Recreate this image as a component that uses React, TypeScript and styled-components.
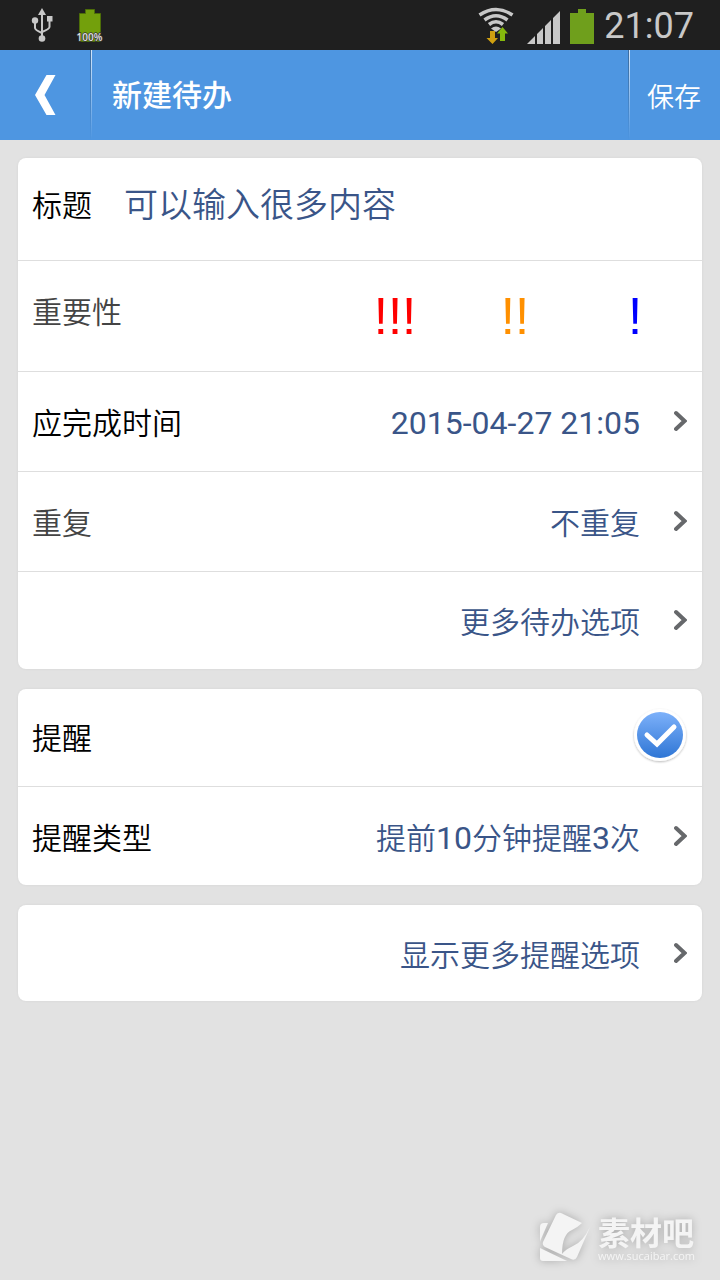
import React, { useState } from "react";
import styled, { createGlobalStyle } from "styled-components";

const GlobalStyle = createGlobalStyle`
  * { box-sizing: border-box; }
  body {
    margin: 0;
    background: #e2e2e2;
    font-family: Roboto, "Noto Sans CJK SC DemiLight", "Noto Sans CJK SC", sans-serif;
    font-size: 30px;
    font-weight: 350;
    line-height: 40px;
    color: #000;
  }
  button, input { font: inherit; color: inherit; }
`;

const Screen = styled.div`
  position: relative;
  min-height: 100vh;
  display: flex;
  flex-direction: column;
`;

const StatusBar = styled.div`
  height: 50px;
  padding: 2px 26px 0 28px;
  display: flex;
  align-items: center;
  justify-content: space-between;
  background: #1f1f1f;
  color: #c8c8c8;
`;

const StatusGroup = styled.div<{ $gap: number }>`
  display: flex;
  align-items: center;
  gap: ${(p) => p.$gap}px;
`;

const Clock = styled.time`
  font-size: 36px;
  font-weight: 400;
`;

const TitleBar = styled.header`
  height: 90px;
  display: flex;
  background: #4e96e1;
  color: #fff;
`;

const Separator = styled.span`
  width: 2px;
  background: linear-gradient(90deg, #3c6c9e 50%, #d4e6fa 50%);
  mask-image: linear-gradient(#000, transparent);
`;

const BarButton = styled.button`
  width: 90px;
  padding: 6px 2px 0 0;
  border: 0;
  background: none;
  font-size: 27px;
  cursor: pointer;
  svg { display: block; margin: 0 auto; }
`;

const BackButton = styled(BarButton)`
  padding: 0;
`;

const PageTitle = styled.h1`
  flex: 1;
  margin: 0;
  padding: 2px 20px 0;
  font-family: Roboto, "Noto Sans CJK SC", sans-serif;
  font-size: 30px;
  line-height: 88px;
  font-weight: 500;
`;

const Form = styled.form`
  padding: 18px;
  display: flex;
  flex-direction: column;
  gap: 20px;
`;

const Card = styled.section`
  background: #fff;
  border-radius: 8px;
  box-shadow: 0 0 3px rgba(0, 0, 0, 0.06);
  overflow: hidden;
  > * + * { box-shadow: inset 0 1px #dedede; }
`;

const Row = styled.div<{ $height: number }>`
  min-height: ${(p) => p.$height}px;
  padding: 0 15px 0 14px;
  display: flex;
  align-items: center;
`;

const RowButton = styled.button<{ $height: number }>`
  width: 100%;
  min-height: ${(p) => p.$height}px;
  padding: 0 15px 0 14px;
  display: flex;
  align-items: center;
  gap: 34px;
  border: 0;
  background: none;
  text-align: left;
  cursor: pointer;
`;

const TitleRow = styled(Row)`
  padding-bottom: 8px;
`;

const Label = styled.label`
  flex: none;
  padding-top: 2px;
`;

const Name = styled.span<{ $muted?: boolean }>`
  flex: none;
  padding-top: 6px;
  color: ${(p) => (p.$muted ? "#444" : "#000")};
`;

const Value = styled.span`
  flex: 1;
  padding-top: 5px;
  text-align: right;
  color: #3a5588;
`;

const Digits = styled.span`
  font-size: 32px;
  font-weight: 400;
`;

const TitleInput = styled.input`
  flex: 1;
  min-width: 0;
  margin-left: 32px;
  padding: 0;
  border: 0;
  outline: 0;
  background: none;
  color: #3a5588;
  font-size: 34px;
  line-height: 48px;
`;

const Levels = styled.div`
  flex: 1;
  display: flex;
  justify-content: flex-end;
  margin-right: -8px;
`;

const HiddenInput = styled.input`
  position: absolute;
  opacity: 0;
  width: 1px;
  height: 1px;
  margin: 0;
`;

const Level = styled.label<{ $color: string }>`
  width: 120px;
  padding-top: 2px;
  text-align: center;
  font-family: "Liberation Sans", sans-serif;
  font-size: 51px;
  font-weight: 400;
  line-height: 60px;
  color: ${(p) => p.$color};
  cursor: pointer;
`;

const MutedLegend = styled.span`
  flex: none;
  color: #444;
  padding-bottom: 6px;
`;

const Toggle = styled.label`
  margin-left: auto;
  margin-right: -3px;
  cursor: pointer;
  svg { display: block; }
`;

const Watermark = styled.div`
  position: absolute;
  right: 25px;
  bottom: 16px;
  display: flex;
  align-items: center;
  gap: 6px;
  color: #f4f4f4;
  filter: drop-shadow(0 0 4px rgba(0, 0, 0, 0.25));
`;

const WatermarkText = styled.div`
  display: flex;
  flex-direction: column;
`;

const WatermarkName = styled.span`
  font-family: "Noto Sans CJK SC", sans-serif;
  font-size: 32px;
  line-height: 36px;
  font-weight: 700;
`;

const WatermarkUrl = styled.span`
  font-family: "Open Sans", sans-serif;
  font-size: 11px;
  font-weight: 500;
  line-height: 14px;
`;

const UsbIcon = () => (
  <svg width="28" height="36" viewBox="0 0 28 36" fill="none" stroke="#c8c8c8" strokeWidth="2">
    <path d="M14 6V30M7 14V20Q7 22 14 25M21.500 12V19Q21.500 21 14 24" />
    <path d="M14 0L18 7H10Z" fill="#c8c8c8" stroke="none" />
    <circle cx="7" cy="12.500" r="3.200" fill="#c8c8c8" stroke="none" />
    <circle cx="14" cy="30.500" r="3.300" fill="#c8c8c8" stroke="none" />
    <path d="M19 8H24.500V13.500H19Z" fill="#c8c8c8" stroke="none" />
  </svg>
);

const BatteryLevelIcon = () => (
  <svg width="30" height="36" viewBox="0 0 30 36">
    <path d="M10.500 1.500H19.500V5.500H25.500V33.500H4.500V5.500H10.500Z" fill="#73a00c" stroke="#4d6e08" strokeWidth="1" />
    <text x="14.500" y="33" textAnchor="middle" fontFamily="Open Sans, sans-serif" fontSize="10" fontWeight="600" fill="#e0e0e0" stroke="#333" strokeWidth="1.500" paintOrder="stroke">100%</text>
  </svg>
);

const WifiIcon = () => (
  <svg width="36" height="38" viewBox="0 0 36 38" fill="none">
    <g stroke="#c8c8c8" strokeWidth="3.600">
      <path d="M1.500 8Q18 -3 34.500 8" />
      <path d="M6.500 13Q18 4.500 29.500 13" />
      <path d="M11 17.500Q18 12 25 17.500" />
    </g>
    <path d="M13 21.500Q18 17.500 23 21.500L18 25Z" fill="#c8c8c8" />
    <path d="M12 24H17V31H20L14.500 37L8.500 31H12Z" fill="#d0a010" />
    <path d="M24.500 20L30 26.500H27V34H22V26.500H19Z" fill="#85b80d" />
  </svg>
);

const SignalIcon = () => (
  <svg width="33" height="36" viewBox="0 0 33 36" fill="#c8c8c8">
    <path d="M0 36L8 28V36ZM10 26L16 20V36H10ZM18 18L24 12V36H18ZM26 10L33 3V36H26Z" />
  </svg>
);

const BatteryIcon = () => (
  <svg width="24" height="36" viewBox="0 0 24 36">
    <path d="M8 1H16V5H24V36H0V5H8Z" fill="#6f9f1c" />
  </svg>
);

const BackIcon = () => (
  <svg width="22" height="40" viewBox="0 0 22 40">
    <path d="M12.500 0H21.500L10.500 20L21.500 40H12.500L1 20Z" fill="#fff" />
  </svg>
);

const Chevron = () => (
  <svg width="13" height="22" viewBox="0 0 13 22" fill="none">
    <path d="M2 3L10.500 11L2 19" stroke="#66686b" strokeWidth="4" strokeLinecap="round" />
  </svg>
);

const CheckBadge = ({ on }: { on: boolean }) => (
  <svg width="60" height="60" viewBox="0 0 60 60" fill="none">
    <defs>
      <linearGradient id="badge" x1="0" y1="0" x2="0" y2="1">
        <stop offset="0" stopColor={on ? "#7db1fa" : "#d8d8d8"} />
        <stop offset="1" stopColor={on ? "#2f76d5" : "#b8b8b8"} />
      </linearGradient>
      <filter id="badgeShadow" x="-20%" y="-20%" width="140%" height="140%">
        <feDropShadow dx="0" dy="1" stdDeviation="1" floodColor="#000" floodOpacity="0.28" />
      </filter>
    </defs>
    <circle cx="30" cy="27" r="26" fill="#fff" filter="url(#badgeShadow)" />
    <circle cx="30" cy="27" r="23" fill="url(#badge)" />
    <path d="M17 27L27 36L44 19" stroke="#fff" strokeWidth="5" strokeLinecap="round" />
  </svg>
);

const WatermarkLogo = () => (
  <svg width="52" height="52" viewBox="0 0 52 52" fill="#f4f4f4">
    <path d="M0 15Q0 11 4 11H8L1 27Q0 29 0 30Z" />
    <path d="M0 36L27 49H3Q0 49 0 46Z" />
    <path d="M16 3Q18 0 21 1L42 11Q38 15 32 18Q22 22 22 42Q26 37 33 34Q43 30 50 15L37 45Q35 49 31 47L5 35Q2 33 3 30Z" />
  </svg>
);

const levels = [
  { id: "high", mark: "!!!", color: "#f00" },
  { id: "medium", mark: "!!", color: "#ff9000" },
  { id: "low", mark: "!", color: "#00f" },
];

type LinkRowProps = { name?: string; value: string; height: number; muted?: boolean };

const LinkRow = ({ name, value, height, muted }: LinkRowProps) => (
  <RowButton type="button" $height={height}>
    {name && <Name $muted={muted}>{name}</Name>}
    <Value>
      {value.split(/([\d\-: ]+)/).map((part, i) => (i % 2 ? <Digits key={i}>{part}</Digits> : part))}
    </Value>
    <Chevron />
  </RowButton>
);

export default function App() {
  const [title, setTitle] = useState("可以输入很多内容");
  const [remind, setRemind] = useState(true);

  return (
    <Screen>
      <GlobalStyle />
      <StatusBar>
        <StatusGroup $gap={19}>
          <UsbIcon />
          <BatteryLevelIcon />
        </StatusGroup>
        <StatusGroup $gap={10}>
          <StatusGroup $gap={13}>
            <WifiIcon />
            <SignalIcon />
          </StatusGroup>
          <BatteryIcon />
          <Clock>21:07</Clock>
        </StatusGroup>
      </StatusBar>
      <TitleBar>
        <BackButton type="button" aria-label="返回"><BackIcon /></BackButton>
        <Separator />
        <PageTitle>新建待办</PageTitle>
        <Separator />
        <BarButton type="submit" form="todo">保存</BarButton>
      </TitleBar>
      <Form id="todo" onSubmit={(e) => e.preventDefault()}>
        <Card>
          <TitleRow $height={102}>
            <Label htmlFor="title">标题</Label>
            <TitleInput id="title" value={title} onChange={(e) => setTitle(e.target.value)} />
          </TitleRow>
          <Row $height={111} role="radiogroup" aria-labelledby="importance">
            <MutedLegend id="importance">重要性</MutedLegend>
            <Levels>
              {levels.map((l) => (
                <Level key={l.id} $color={l.color}>
                  <HiddenInput type="radio" name="importance" value={l.id} />
                  {l.mark}
                </Level>
              ))}
            </Levels>
          </Row>
          <LinkRow name="应完成时间" value="2015-04-27 21:05" height={100} />
          <LinkRow name="重复" value="不重复" height={100} muted />
          <LinkRow value="更多待办选项" height={98} />
        </Card>
        <Card>
          <Row $height={97}>
            <Label htmlFor="remind">提醒</Label>
            <Toggle>
              <HiddenInput id="remind" type="checkbox" aria-label="提醒" checked={remind} onChange={(e) => setRemind(e.target.checked)} />
              <CheckBadge on={remind} />
            </Toggle>
          </Row>
          <LinkRow name="提醒类型" value="提前10分钟提醒3次" height={99} />
        </Card>
        <Card>
          <LinkRow value="显示更多提醒选项" height={96} />
        </Card>
      </Form>
      <Watermark>
        <WatermarkLogo />
        <WatermarkText>
          <WatermarkName>素材吧</WatermarkName>
          <WatermarkUrl>www.sucaibar.com</WatermarkUrl>
        </WatermarkText>
      </Watermark>
    </Screen>
  );
}
